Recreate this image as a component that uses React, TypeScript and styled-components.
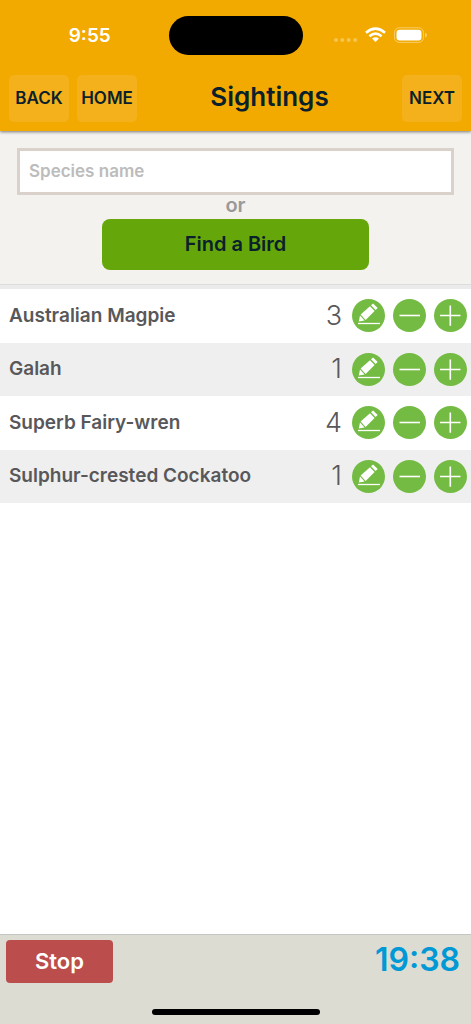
import React, { useState } from 'react';
import styled, { createGlobalStyle } from 'styled-components';

const GlobalStyle = createGlobalStyle`
  *, *::before, *::after { box-sizing: border-box; }
  body {
    margin: 0;
    background: #ffffff;
    font-family: Inter, "Open Sans", "Liberation Sans", sans-serif;
  }
  button, input { font: inherit; }
  button { cursor: pointer; }
`;

const Page = styled.div`
  display: flex;
  flex-direction: column;
  min-height: 100vh;
`;

const Header = styled.header`
  position: relative;
  background: #f3aa00;
  padding-bottom: 9px;
  box-shadow: 0 1px 3px rgba(0, 0, 0, 0.5);
`;

const StatusBar = styled.div`
  display: grid;
  grid-template-columns: 1fr auto 1fr;
  align-items: center;
  height: 60px;
  padding-top: 10px;
  margin-bottom: 15px;
`;

const Clock = styled.time`
  justify-self: center;
  padding-left: 11px;
  color: #ffffff;
  font-size: 19px;
  font-weight: 600;
`;

const Island = styled.div`
  width: 134px;
  height: 39px;
  border-radius: 20px;
  background: #000000;
`;

const StatusIcons = styled.svg`
  justify-self: center;
  width: 95px;
  height: 18px;
  margin-left: -12px;
`;

const NavBar = styled.nav`
  display: flex;
  gap: 8px;
  padding: 0 9px;
`;

const NavButton = styled.button`
  width: 60px;
  height: 47px;
  padding: 0 0 2px;
  border: 0;
  border-radius: 5px;
  background: #f4b11c;
  color: #0a212c;
  font-size: 17px;
  font-weight: 600;
`;

const Title = styled.h1`
  flex: 1;
  margin: 0;
  color: #0a212c;
  font-size: 26px;
  font-weight: 600;
  line-height: 44px;
  text-align: center;
`;

const SearchPanel = styled.section`
  display: flex;
  flex-direction: column;
  align-items: center;
  padding: 17px 17px 14px;
  border-bottom: 1px solid #dddddd;
  background: #f4f2ee;
`;

const SpeciesInput = styled.input`
  width: 100%;
  height: 47px;
  padding: 0 9px 2px;
  border: 3px solid #d9d1ca;
  border-radius: 0;
  background: #ffffff;
  color: #555555;
  font-size: 17px;
  font-weight: 600;
  &::placeholder { color: #bcbcbc; opacity: 1; }
`;

const Or = styled.span`
  color: #999999;
  font-size: 20px;
  font-weight: 600;
  line-height: 20px;
  padding-bottom: 4px;
`;

const FindButton = styled.button`
  width: 61%;
  height: 51px;
  padding: 0 0 2px;
  border: 0;
  border-radius: 8px;
  background: #65a70b;
  color: #0a212c;
  font-size: 20px;
  font-weight: 600;
`;

const Sightings = styled.ul`
  flex: 1;
  margin: 0;
  padding: 0;
  border-top: 4px solid #ebebeb;
  list-style: none;
`;

const Row = styled.li`
  display: flex;
  align-items: center;
  gap: 8px;
  height: 53px;
  padding: 0 4px 1px 9px;
  &:nth-child(odd) { height: 54px; }
  &:nth-child(even) { background: #efefef; }
`;

const Species = styled.span`
  flex: 1;
  color: #58585a;
  font-size: 19px;
  font-weight: 600;
  line-height: 24px;
`;

const Count = styled.output`
  padding-right: 2px;
  color: #58585a;
  font-size: 27px;
  font-weight: 300;
  line-height: 34px;
`;

const RoundButton = styled.button`
  width: 33px;
  height: 33px;
  padding: 0;
  border: 0;
  border-radius: 50%;
  background: #74bb43;
  svg { display: block; }
`;

const Footer = styled.footer`
  padding: 5px 0 9px;
  border-top: 1px solid #c5c6c3;
  background: #dcdcd3;
`;

const FooterBar = styled.div`
  display: flex;
  justify-content: space-between;
  padding: 0 11px 0 6px;
`;

const StopButton = styled.button`
  width: 107px;
  height: 43px;
  padding: 0 0 2px;
  border: 0;
  border-radius: 4px;
  background: #bb4d4c;
  color: #ffffff;
  font-size: 22px;
  font-weight: 600;
`;

const Timer = styled.time`
  color: #0099d6;
  font-size: 32px;
  font-weight: 600;
  line-height: 40px;
`;

const HomeIndicator = styled.div`
  width: 168px;
  height: 6px;
  margin: 26px auto 0;
  border-radius: 3px;
  background: #000000;
`;

const PencilIcon = () => (
  <svg width="33" height="33" viewBox="0 0 33 33" fill="#fff" aria-hidden="true">
    <path d="M8.6 15.4 18 7.2 22.6 12 13.6 20.9Z" />
    <path d="M19 6.3 21.1 4.5 25.7 9.1 23.6 11Z" />
    <path d="M8 16.4 12.6 21.5 6.8 22.6Z" />
    <path d="M6 24.5H28" stroke="#fff" strokeWidth="1.3" />
  </svg>
);

const MinusIcon = () => (
  <svg width="33" height="33" viewBox="0 0 33 33" stroke="#fff" strokeWidth="1.6" aria-hidden="true">
    <path d="M6.5 16.5H27" />
  </svg>
);

const PlusIcon = () => (
  <svg width="33" height="33" viewBox="0 0 33 33" stroke="#fff" strokeWidth="1.6" aria-hidden="true">
    <path d="M6 16.5H26.5M16.3 6.5V26.8" />
  </svg>
);

const initial = [
  { name: 'Australian Magpie', count: 3 },
  { name: 'Galah', count: 1 },
  { name: 'Superb Fairy-wren', count: 4 },
  { name: 'Sulphur-crested Cockatoo', count: 1 },
];

export default function App() {
  const [birds, setBirds] = useState(initial);
  const change = (name: string, step: number) =>
    setBirds(list =>
      list.map(b => (b.name === name ? { ...b, count: Math.max(0, b.count + step) } : b)),
    );

  return (
    <Page>
      <GlobalStyle />
      <Header>
        <StatusBar>
          <Clock>9:55</Clock>
          <Island />
          <StatusIcons viewBox="0 0 95 18" fill="#fff" aria-hidden="true">
            <g opacity="0.3">
              <circle cx="3" cy="14" r="2.1" />
              <circle cx="9.3" cy="14" r="2.1" />
              <circle cx="15.7" cy="14" r="2.1" />
              <circle cx="22.2" cy="14" r="2.1" />
            </g>
            <path d="M42.5 16 39 12.6Q42.5 9.9 46 12.6Z" />
            <path d="M36.4 10.2Q42.5 5 48.6 10.2" fill="none" stroke="#fff" strokeWidth="2.6" />
            <path d="M33 6.7Q42.5-1.3 52 6.7" fill="none" stroke="#fff" strokeWidth="2.6" />
            <rect x="61.5" y="1.8" width="29" height="14.6" rx="4.8" fill="none" stroke="#fff" strokeOpacity="0.4" />
            <rect x="63.5" y="3.8" width="25" height="10.6" rx="3.2" />
            <path d="M92 6.7Q94 7.5 94 9.1T92 11.5Z" opacity="0.45" />
          </StatusIcons>
        </StatusBar>
        <NavBar>
          <NavButton type="button">BACK</NavButton>
          <NavButton type="button">HOME</NavButton>
          <Title>Sightings</Title>
          <NavButton type="button">NEXT</NavButton>
        </NavBar>
      </Header>

      <SearchPanel>
        <SpeciesInput type="text" placeholder="Species name" aria-label="Species name" />
        <Or>or</Or>
        <FindButton type="button">Find a Bird</FindButton>
      </SearchPanel>

      <Sightings>
        {birds.map(({ name, count }) => (
          <Row key={name}>
            <Species>{name}</Species>
            <Count>{count}</Count>
            <RoundButton type="button" aria-label={`Edit ${name}`}>
              <PencilIcon />
            </RoundButton>
            <RoundButton type="button" aria-label={`Remove one ${name}`} onClick={() => change(name, -1)}>
              <MinusIcon />
            </RoundButton>
            <RoundButton type="button" aria-label={`Add one ${name}`} onClick={() => change(name, 1)}>
              <PlusIcon />
            </RoundButton>
          </Row>
        ))}
      </Sightings>

      <Footer>
        <FooterBar>
          <StopButton type="button">Stop</StopButton>
          <Timer>19:38</Timer>
        </FooterBar>
        <HomeIndicator />
      </Footer>
    </Page>
  );
}
